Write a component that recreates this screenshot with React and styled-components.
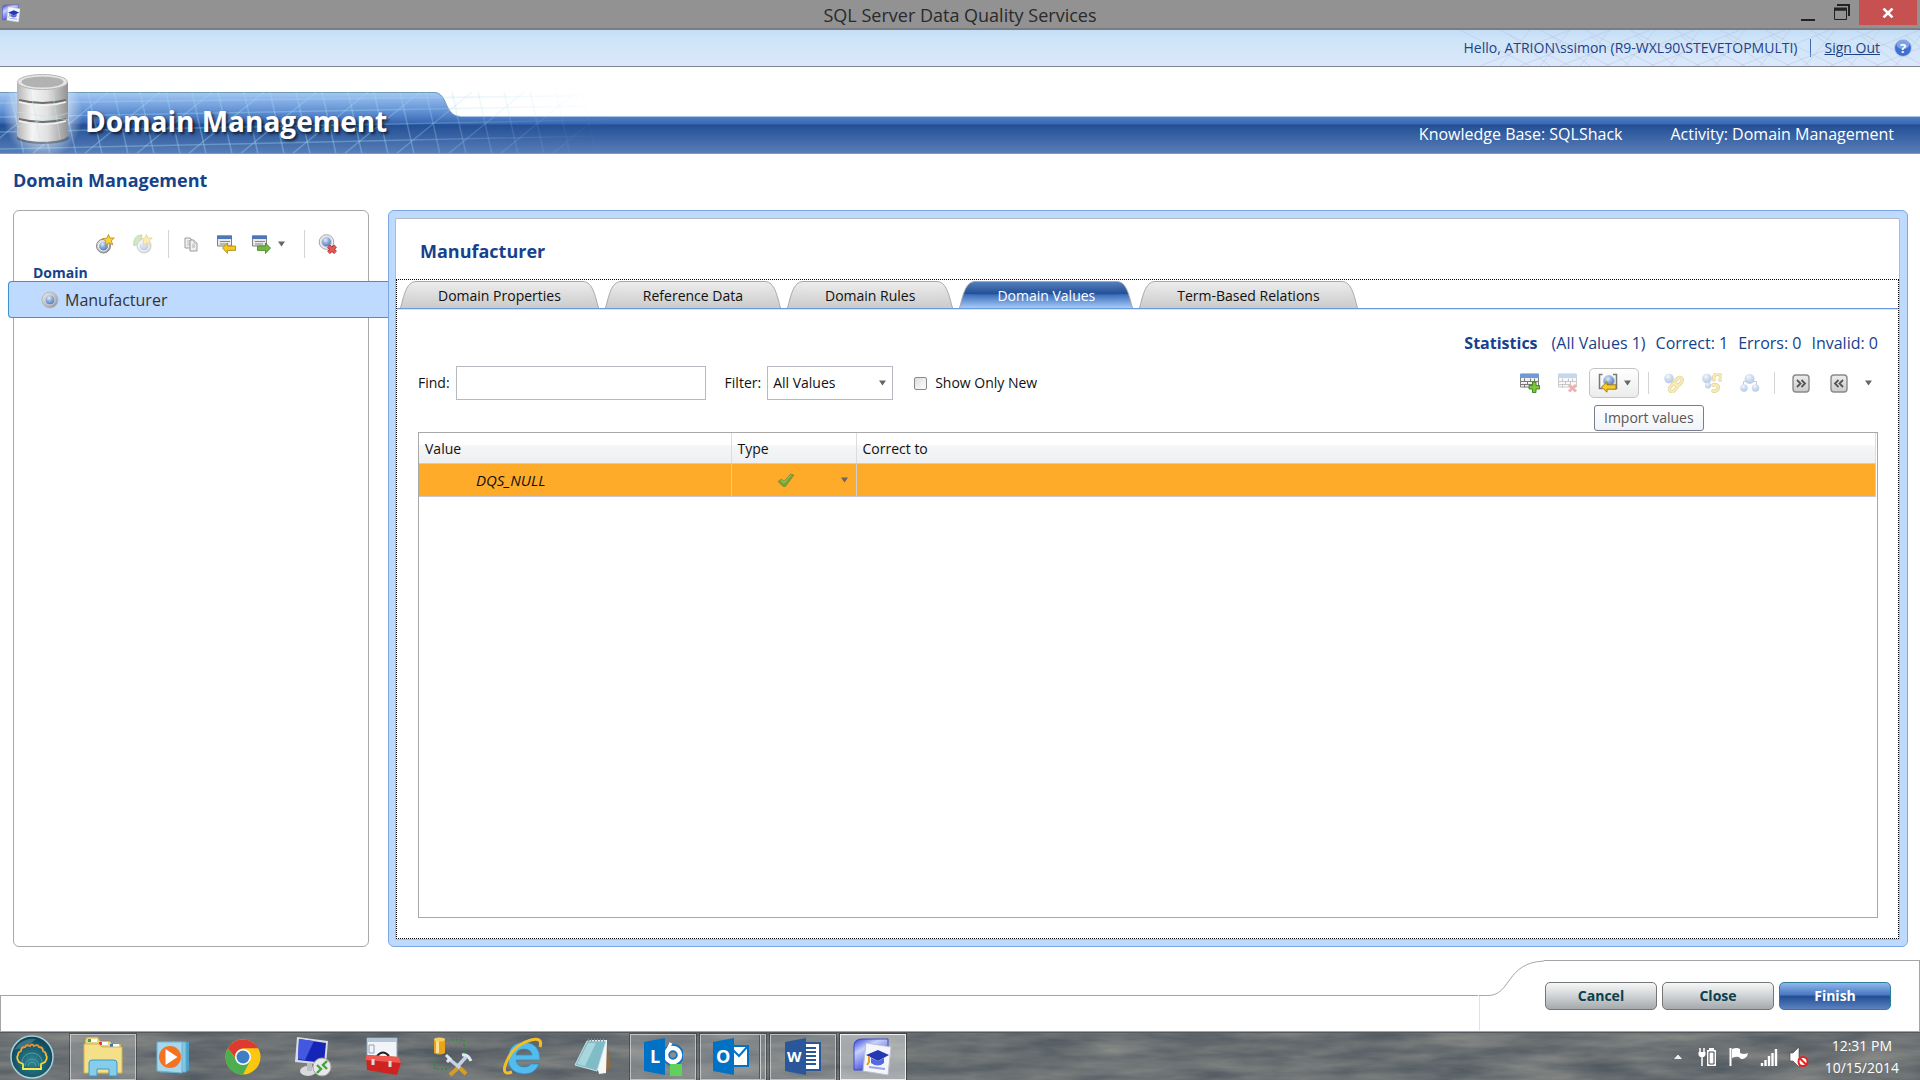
import React from "react";
import styled, { createGlobalStyle, css } from "styled-components";

const color = {
  navy: "#15428b",
  panel: "#bfdaff",
  panelLine: "#7ba7e6",
  line: "#a9a9a9",
  row: "#fdab28",
};

const GlobalStyle = createGlobalStyle`
  * {
    box-sizing: border-box;
  }
  body {
    margin: 0;
    background: #fff;
    color: #111;
    font-family: "Open Sans", "Noto Sans", sans-serif;
    font-size: 14px;
    line-height: 20px;
  }
  button, input, select {
    font: inherit;
    color: inherit;
  }
`;

const plainButton = css`
  display: flex;
  align-items: center;
  justify-content: center;
  padding: 0;
  border: 0;
  background: none;
  cursor: pointer;
`;

const Page = styled.div`
  display: flex;
  flex-direction: column;
  min-height: 100vh;
`;

/* Window title bar */

const TitleBar = styled.div`
  display: grid;
  grid-template-columns: 1fr auto 1fr;
  height: 30px;
  background: #929292;
  border-bottom: 2px solid #7d7d7d;
  color: #2a2a2a;
`;

const AppIcon = styled.div`
  padding: 4px 2px;
`;

const WindowTitle = styled.div`
  font-size: 18px;
  line-height: 30px;
`;

const WindowButtons = styled.div`
  display: flex;
  justify-content: flex-end;
  padding-right: 3px;
`;

const WindowButton = styled.button`
  ${plainButton}
  width: ${(p) => (p.$close ? 58 : 34)}px;
  height: ${(p) => (p.$close ? 25 : 28)}px;
  background: ${(p) => (p.$close ? "#c75050" : "none")};
`;

/* User bar */

const UserBar = styled.div`
  position: relative;
  display: flex;
  align-items: center;
  justify-content: flex-end;
  height: 37px;
  padding-right: 8px;
  color: #1e4287;
  background: linear-gradient(#c3ddf9, #d0e5f8 30%, #dbe8fc);
  border-bottom: 1px solid #808488;
`;

const UserMesh = styled.svg`
  position: absolute;
  right: 0;
  top: 0;
`;

const UserText = styled.span`
  position: relative;
`;

const UserDivider = styled.span`
  width: 1px;
  height: 18px;
  margin: 0 13px;
  background: #3e6bb0;
`;

const SignOut = styled.a`
  position: relative;
  margin-right: 14px;
  color: inherit;
`;

const HelpButton = styled.button`
  ${plainButton}
  position: relative;
`;

/* Banner */

const Banner = styled.header`
  position: relative;
  display: flex;
  align-items: flex-end;
  height: 87px;
`;

const BannerArt = styled.svg`
  position: absolute;
  left: 0;
  bottom: 0;
`;

const BannerTitle = styled.h1`
  position: relative;
  width: 459px;
  margin: 0;
  padding: 0 0 13px 85px;
  color: #fff;
  font-size: 28px;
  line-height: 40px;
  white-space: nowrap;
  text-shadow: 2px 2px 3px rgba(0, 0, 0, 0.7);
`;

const BannerStrip = styled.div`
  position: absolute;
  inset: auto 0 0 0;
  height: 38px;
  background: linear-gradient(#a9c3e6 0 1px, #4f7ec4 1px, #3a67b1 8px, #234f95 9px, #587eb9);
  border-bottom: 1px solid #7b9dbb;
`;

const BannerInfo = styled.div`
  position: relative;
  display: flex;
  flex: 1;
  justify-content: flex-end;
  gap: 48px;
  height: 38px;
  padding-right: 26px;
  color: #fff;
  font-size: 16px;
  line-height: 36px;
`;

/* Workspace */

const SectionTitle = styled.h2`
  margin: 0;
  padding: 14px 13px 18px;
  color: ${color.navy};
  font-size: 18px;
  line-height: 24px;
`;

const Workspace = styled.main`
  display: flex;
  flex: 1;
  gap: 19px;
  padding: 0 12px 13px 13px;
`;

const SidePanel = styled.aside`
  width: 356px;
  border: 1px solid ${color.line};
  border-radius: 6px;
`;

const SideTools = styled.div`
  display: flex;
  align-items: center;
  height: 28px;
  margin: 19px 0 0 81px;
`;

const ToolButton = styled.button`
  ${plainButton}
  width: 20px;
  height: 20px;
  margin-right: ${(p) => p.$gap || 0}px;
  opacity: ${(p) => (p.disabled ? 0.4 : 1)};
`;

const ToolLine = styled.span`
  width: 1px;
  height: ${(p) => p.$height || 28}px;
  margin-right: ${(p) => p.$gap}px;
  background: #d4d4d8;
`;

const SideLabel = styled.div`
  height: 23px;
  padding: 6px 19px 0;
  color: ${color.navy};
  font-weight: bold;
  line-height: 18px;
`;

const DomainItem = styled.button`
  ${plainButton}
  justify-content: flex-start;
  gap: 6px;
  width: calc(100% + 26px);
  height: 37px;
  margin-left: -6px;
  padding-left: 32px;
  background: ${color.panel};
  border: 1px solid #3b94ce;
  border-right: 0;
  border-radius: 4px 0 0 4px;
  color: #333;
  font-size: 16px;
`;

const MainFrame = styled.section`
  display: flex;
  flex: 1;
  padding: 7px 7px 6px 6px;
  background: ${color.panel};
  border: 1px solid ${color.panelLine};
  border-radius: 6px;
`;

const MainPanel = styled.div`
  display: flex;
  flex: 1;
  flex-direction: column;
  background: #fff;
  border: 1px solid #b4bac4;
  border-radius: 2px;
`;

const DomainTitle = styled.h3`
  margin: 0;
  padding: 20px 24px 16px;
  color: ${color.navy};
  font-size: 18px;
  line-height: 24px;
`;

const TabArea = styled.div`
  display: flex;
  flex: 1;
  flex-direction: column;
  border: 1px dotted #000;
`;

const TabBar = styled.div`
  display: flex;
  gap: 6px;
  padding: 1px 3px 0;
  border-bottom: 1px solid #6b9ae0;
  box-shadow: 0 1px 0 #d5e4f9;
`;

const grayFill = "linear-gradient(#ededed, #cbcbcb)";
const blueFill = "linear-gradient(#5580bd, #234f97 45%, #3e6fbb 50%, #a5cbf8)";

const TabButton = styled.button`
  ${plainButton}
  height: 27px;
  color: ${(p) => (p.$active ? "#fff" : "#111")};
`;

const TabLabel = styled.span`
  height: 27px;
  padding: 0 22px;
  line-height: 28px;
  white-space: nowrap;
  border-top: 1px solid #a8a8a8;
  background: ${(p) => (p.$active ? blueFill : grayFill)};
`;

const TabBody = styled.div`
  display: flex;
  flex: 1;
  flex-direction: column;
  padding: 22px 20px 20px 21px;
`;

const Statistics = styled.div`
  display: flex;
  justify-content: flex-end;
  gap: 10px;
  color: ${color.navy};
  font-size: 16px;
  line-height: 24px;
`;

const StatisticsTitle = styled.strong`
  margin-right: 4px;
`;

const ToolRow = styled.div`
  display: flex;
  align-items: center;
  justify-content: space-between;
  height: 34px;
  margin: 11px 0 32px;
`;

const Filters = styled.div`
  display: flex;
  align-items: center;
`;

const FieldLabel = styled.label`
  margin-right: 6px;
`;

const FindInput = styled.input`
  width: 250px;
  height: 34px;
  margin-right: 19px;
  padding: 0 6px;
  border: 1px solid #b6b9c0;
`;

const SelectBox = styled.div`
  position: relative;
  width: 126px;
  margin-right: 21px;
`;

const FilterSelect = styled.select`
  width: 100%;
  height: 34px;
  padding: 0 5px;
  appearance: none;
  background: #fff;
  border: 1px solid #b6b9c0;
`;

const SelectArrow = styled.span`
  position: absolute;
  right: 7px;
  top: 14px;
  display: flex;
  pointer-events: none;
`;

const CheckBox = styled.input`
  appearance: none;
  width: 13px;
  height: 13px;
  margin: 0 8px 0 0;
  background: linear-gradient(135deg, #ddd, #fff);
  border: 1px solid #8a8a8a;
  border-radius: 2px;
`;

const ValueTools = styled.div`
  display: flex;
  align-items: center;
`;

const ImportWrap = styled.div`
  position: relative;
  margin-right: 9px;
`;

const ImportButton = styled.button`
  ${plainButton}
  gap: 6px;
  width: 50px;
  height: 30px;
  background: linear-gradient(#fff, #ececec);
  border: 1px solid #c4c4c4;
  border-radius: 5px;
`;

const Tooltip = styled.div`
  position: absolute;
  left: 5px;
  top: 37px;
  padding: 2px 9px;
  white-space: nowrap;
  color: #575757;
  background: linear-gradient(#fff, #f1f3f8);
  border: 1px solid #767f8f;
  border-radius: 3px;
`;

const GridBox = styled.div`
  flex: 1;
  padding-right: 1px;
  border: 1px solid ${color.line};
`;

const Grid = styled.table`
  width: 100%;
  border-collapse: collapse;
  table-layout: fixed;
`;

const HeadCell = styled.th`
  width: ${(p) => p.$width || "auto"};
  height: 30px;
  padding: 2px 6px 0;
  text-align: left;
  font-weight: normal;
  background: linear-gradient(#fff 40%, #f5f6f8 42%, #eeeff1);
  border-right: 1px solid #dcdde0;
  border-bottom: 1px solid #c9ced6;
`;

const ValueCell = styled.td`
  height: 33px;
  padding: 0 0 0 ${(p) => p.$indent || 0}px;
  font-size: 15px;
  font-style: italic;
  background: ${color.row};
  border-right: 1px solid #d0cfd0;
  border-bottom: 1px solid #c6c9cf;
`;

const TypeButton = styled.button`
  ${plainButton}
  justify-content: space-between;
  width: 100%;
  padding: 0 8px 0 45px;
`;

/* Footer */

const Footer = styled.footer`
  display: flex;
  align-items: flex-end;
  height: 72px;
  border-bottom: 1px solid #a5a5a5;
`;

const FooterLine = styled.div`
  flex: 1;
  height: 36px;
  border: solid #a5a5a5;
  border-width: 1px 0 0 1px;
`;

const FooterCurve = styled.svg`
  border-left: 1px solid transparent;
`;

const FooterActions = styled.div`
  display: flex;
  gap: 5px;
  height: 71px;
  padding: 21px 28px 0 1px;
  border: solid #a5a5a5;
  border-width: 1px 1px 0 0;
`;

const ActionButton = styled.button`
  width: 112px;
  height: 28px;
  padding: 0;
  font-weight: bold;
  color: ${(p) => (p.$primary ? "#fff" : "#083f4c")};
  background: ${(p) =>
    p.$primary
      ? "linear-gradient(#8fb8ee, #4a78c0 45%, #234f97 52%, #5b83bf)"
      : "linear-gradient(#f6f7f7, #d4d7d9 45%, #a4a9ad)"};
  border: 1px solid ${(p) => (p.$primary ? "#2c7f99" : "#757575")};
  border-radius: 5px;
`;

/* Taskbar */

const Taskbar = styled.nav`
  position: relative;
  display: flex;
  align-items: center;
  gap: 4px;
  height: 48px;
  padding-left: 10px;
  overflow: hidden;
  background: #6e7276;
  border-top: 1px solid #54585c;
`;

const Water = styled.svg`
  position: absolute;
  inset: 0;
  width: 100%;
  height: 100%;
`;

const StartButton = styled.button`
  ${plainButton}
  position: relative;
  width: 56px;
  justify-content: flex-start;
`;

const tileLook = {
  open: css`
    background: rgba(255, 255, 255, 0.16);
    border: 1px solid rgba(225, 225, 225, 0.65);
    box-shadow: 0 0 0 1px rgba(40, 40, 40, 0.45);
  `,
  active: css`
    background: rgba(255, 255, 255, 0.42);
    border: 1px solid #eee;
    box-shadow: 0 0 0 1px rgba(40, 40, 40, 0.6);
  `,
};

const Tile = styled.button`
  ${plainButton}
  position: relative;
  width: 66px;
  height: 46px;
  ${(p) => tileLook[p.$look]}
  ${(p) =>
    p.$stacked &&
    css`
      padding-right: 5px;
      &::after {
        content: "";
        position: absolute;
        inset: 0 4px 0 auto;
        border-left: 1px solid #ccc;
        box-shadow: -1px 0 0 #555;
      }
    `}
`;

const Tray = styled.div`
  position: relative;
  display: flex;
  align-items: center;
  gap: 11px;
  margin-left: auto;
  padding-right: 21px;
  color: #fff;
`;

const TrayButton = styled.button`
  ${plainButton}
`;

const Clock = styled.time`
  margin-left: 5px;
  line-height: 22px;
  text-align: center;
`;

/* Icons */

const HiddenSvg = styled.svg`
  position: absolute;
`;

function Arrow() {
  return (
    <svg width="7" height="6" viewBox="0 0 7 6">
      <path d="M0 0.5h7L3.5 5.5z" fill="#666" />
    </svg>
  );
}

function Defs() {
  return (
    <HiddenSvg width="0" height="0">
      <defs>
        <radialGradient id="ball" cx="0.4" cy="0.3" r="0.75">
          <stop offset="0" stopColor="#e3edf9" />
          <stop offset="0.45" stopColor="#8aabd9" />
          <stop offset="1" stopColor="#4a74b0" />
        </radialGradient>
        <linearGradient id="ring" x1="0" y1="0" x2="1" y2="1">
          <stop offset="0" stopColor="#f0f0f0" />
          <stop offset="1" stopColor="#8c8c8c" />
        </linearGradient>
        <linearGradient id="gray" x1="0" y1="0" x2="0" y2="1">
          <stop offset="0" stopColor="#ededed" />
          <stop offset="1" stopColor="#cbcbcb" />
        </linearGradient>
        <linearGradient id="blue" x1="0" y1="0" x2="0" y2="1">
          <stop offset="0" stopColor="#5580bd" />
          <stop offset="0.45" stopColor="#234f97" />
          <stop offset="0.5" stopColor="#3e6fbb" />
          <stop offset="1" stopColor="#a5cbf8" />
        </linearGradient>
        <linearGradient id="metal" x1="0" y1="0" x2="1" y2="0">
          <stop offset="0" stopColor="#b4b4b4" />
          <stop offset="0.3" stopColor="#f4f4f4" />
          <stop offset="0.6" stopColor="#e0e0e0" />
          <stop offset="1" stopColor="#929292" />
        </linearGradient>
        <linearGradient id="folder" x1="0" y1="0" x2="0.6" y2="1">
          <stop offset="0" stopColor="#2f3fd0" />
          <stop offset="0.35" stopColor="#c8d2fc" />
          <stop offset="1" stopColor="#2a35cf" />
        </linearGradient>
      </defs>
    </HiddenSvg>
  );
}

function Sphere() {
  return (
    <svg width="18" height="18" viewBox="0 0 18 18">
      <circle cx="9" cy="9" r="8" fill="url(#ring)" stroke="#b3b6bc" />
      <circle cx="9" cy="9" r="5" fill="url(#ball)" stroke="#ccd6e6" />
    </svg>
  );
}

const STAR = "M13.5 0.5l1.5 3.6 4.3-.2-3 3 1.6 4-4.1-2-3.7 2.6.7-4.4-3.3-2.4 4.3-.6z";
const LEFT_ARROW = "M6.500 14l5-5v3h8v4.400h-8v3z";
const RIGHT_ARROW = "M19.500 14l-5-5v3h-8v4.400h8v3z";

function NewDomainIcon({ leaf }) {
  const cx = leaf ? 11 : 8.5;
  return (
    <svg width="20" height="20" viewBox="0 0 20 20">
      {leaf && <path d="M1 12C0 5 3 1 9 1C8 7 6 10 1 12z" fill="#8fc96b" stroke="#5a9e3d" />}
      <circle cx={cx} cy="12" r="7" fill="url(#ring)" stroke="#858585" />
      <circle cx={cx} cy="12" r="5" fill="url(#ball)" stroke="#f8f8f8" />
      <path d={STAR} fill="#f7d33a" stroke="#b38c21" strokeWidth="0.8" />
    </svg>
  );
}

function CopyIcon() {
  return (
    <svg width="20" height="20" viewBox="0 0 20 20" fill="#f0f0f0" stroke="#9b9b9b">
      <path d="M3 4h5l2 2v8H3z" />
      <path d="M5 7h3M5 9h3M5 11h3" stroke="#bbb" />
      <path d="M8 6h4l3 3v8H8z" />
      <path d="M12 6v3h3M10 11h3M10 13h3" stroke="#b0b0b0" />
    </svg>
  );
}

function SheetArrowIcon({ right }) {
  return (
    <svg width="20" height="20" viewBox="0 0 20 20">
      <path d="M1.5 2h14v10h-14z" fill="#e8e8e8" stroke="#808080" />
      <path d="M1 1.5h15V5H1z" fill="#4d78b8" />
      <path d="M4 7.500h10M4 10h8" stroke="#888" />
      <path
        d={right ? RIGHT_ARROW : LEFT_ARROW}
        fill={right ? "#74b843" : "#f6c71c"}
        stroke={right ? "#437f27" : "#a5821a"}
        strokeWidth="0.8"
      />
    </svg>
  );
}

function DeleteDomainIcon() {
  return (
    <svg width="20" height="20" viewBox="0 0 20 20">
      <circle cx="8.5" cy="8" r="7.3" fill="#eee" stroke="#a5a5a5" />
      <circle cx="8.5" cy="8" r="5" fill="url(#ball)" stroke="#cbd3df" />
      <path d="M10.5 12l7 6.5m0-6.5l-7 6.5" stroke="#a32c2c" strokeWidth="4" />
      <path d="M10.5 12l7 6.5m0-6.5l-7 6.5" stroke="#e05a58" strokeWidth="2.4" />
    </svg>
  );
}

function GridRowIcon({ remove }) {
  return (
    <svg width="20" height="20" viewBox="0 0 20 20">
      <path d="M0.5 1h18v13h-18z" fill="#f0f0f0" stroke="#808080" />
      <path d="M0 1h19v4H0z" fill="#6f9ad8" />
      <path
        d="M0 8.5h19M0 11.5h13M4.5 5.5v3M10.5 5.5v3M14.5 5.5v3M7.5 8.5v3M12.5 8.5v3M4.5 11.5v3"
        stroke="#777"
      />
      {remove ? (
        <path d="M11 12l7 6.500m0-6.500l-7 6.500" stroke="#d2403c" strokeWidth="3" />
      ) : (
        <path
          d="M12.5 9h3.500v3.500h3.500V16H16v3.500h-3.500V16H9v-3.500h3.500z"
          fill="#7cc63c"
          stroke="#3f7d20"
          strokeWidth="0.9"
        />
      )}
    </svg>
  );
}

function ImportIcon() {
  return (
    <svg width="20" height="20" viewBox="0 0 20 20">
      <path d="M4.500 1.500h-3v14h3M15 1.500h3.500v14H15" fill="none" stroke="#777" strokeWidth="1.500" />
      <circle cx="11" cy="8" r="5.500" fill="url(#ball)" stroke="#b8c4d6" />
      <path d="M3.500 14L9 8.800v3h9v4.400H9v3z" fill="#f8cc22" stroke="#94721c" strokeWidth="0.900" />
    </svg>
  );
}

function LinkIcon({ broken }) {
  return (
    <svg width="20" height="20" viewBox="0 0 20 20">
      <circle cx="5" cy="5.500" r="4.800" fill="url(#ball)" />
      {broken && <circle cx="6" cy="12.500" r="3" fill="url(#ball)" />}
      <g fill="none" strokeLinecap="round">
        {[
          { stroke: "#b08a18", strokeWidth: 3.4 },
          { stroke: "#f4cf3c", strokeWidth: 2 },
        ].map((line) =>
          broken ? (
            <path key={line.stroke} {...line} d="M12 7q-1-3 1-5t5 0 0 5M11 12q4-1 5 1t-1 4-4 1" />
          ) : (
            <g key={line.stroke} {...line} transform="rotate(-50 12 11)">
              <rect x="3" y="8.500" width="9" height="5.500" rx="2.700" />
              <rect x="11" y="8.500" width="9" height="5.500" rx="2.700" />
            </g>
          )
        )}
      </g>
    </svg>
  );
}

function TreeIcon() {
  return (
    <svg width="20" height="20" viewBox="0 0 20 20">
      <path d="M3.5 14V8.5h13V14" fill="none" stroke="#777" />
      <circle cx="9.5" cy="6" r="5" fill="url(#ball)" />
      <circle cx="4" cy="15" r="3.7" fill="url(#ball)" />
      <circle cx="15.5" cy="15" r="3.7" fill="url(#ball)" />
    </svg>
  );
}

function ChevronsIcon({ left }) {
  return (
    <svg width="18" height="19" viewBox="0 0 18 19">
      <rect x="1" y="1" width="16" height="17" rx="3" fill="url(#gray)" stroke="#8a8a8a" strokeWidth="1.4" />
      <path
        d={left ? "M8.5 6L5 9.5 8.5 13M13 6L9.5 9.5 13 13" : "M5 6l3.5 3.5L5 13M9.5 6L13 9.5 9.5 13"}
        fill="none"
        stroke="#555"
        strokeWidth="1.8"
      />
    </svg>
  );
}

function CheckIcon() {
  return (
    <svg width="18" height="16" viewBox="0 0 18 16">
      <path d="M1 9.500l3.500-2.500L7 9.500 13.500 2l3.500 1L8.500 14.500H6z" fill="#6fa63a" stroke="#8c8a34" strokeWidth="0.800" />
      <path d="M4 8.500l3 2.500 7-8" fill="none" stroke="#9ccc66" />
    </svg>
  );
}

function DqsIcon({ size }) {
  return (
    <svg width={size} height={size} viewBox="0 0 40 40">
      <path d="M1 33V9Q1 2 9 2h26v31H1z" fill="url(#folder)" stroke="#3a49c8" />
      <path d="M13 6l25 4-3 28-25-4z" fill="#f4f6fc" stroke="#bcc2d4" />
      <path d="M13 18l12-5 11 5-11 6z" fill="#2637b3" />
      <path d="M18 21v5q7 5 13 0v-5l-6 3z" fill="#5468e4" />
      <path d="M16 19v6l-2 3" fill="none" stroke="#e0a020" strokeWidth="2" />
      <path d="M16 30l16 2" stroke="#98a6e8" strokeWidth="2" />
    </svg>
  );
}

function TabEar({ right, active }) {
  const d = "M0.5 27C4 15 6 1 16 0.5";
  return (
    <svg width="16" height="27" viewBox="0 0 16 27">
      <g transform={right ? "translate(16 0) scale(-1 1)" : undefined}>
        <path d={`${d}V27z`} fill={active ? "url(#blue)" : "url(#gray)"} />
        <path d={d} fill="none" stroke="#a8a8a8" />
      </g>
    </svg>
  );
}

function BannerDrawing() {
  const steps = Array.from({ length: 24 }, (_, i) => i * 26 - 20);
  return (
    <BannerArt width="640" height="87" viewBox="0 0 640 87" aria-hidden="true">
      <defs>
        <linearGradient id="tabFill" x1="0" y1="0" x2="0" y2="1">
          <stop offset="0" stopColor="#a6c9f6" />
          <stop offset="0.35" stopColor="#5b8ad0" />
          <stop offset="0.5" stopColor="#3a68b2" />
          <stop offset="0.54" stopColor="#234f95" />
          <stop offset="1" stopColor="#587eb9" />
        </linearGradient>
        <linearGradient id="fadeFill" x1="0" y1="0" x2="1" y2="0">
          <stop offset="0.6" stopColor="#fff" />
          <stop offset="0.95" stopColor="#fff" stopOpacity="0" />
        </linearGradient>
        <mask id="fade">
          <path d="M0 25h640v61H0z" fill="url(#fadeFill)" />
        </mask>
        <radialGradient id="glow">
          <stop offset="0.4" stopColor="#fff" stopOpacity="0.85" />
          <stop offset="1" stopColor="#fff" stopOpacity="0" />
        </radialGradient>
      </defs>
      <path d="M0 25H434C448 25 444 49 460 49.5V86H0z" fill="url(#tabFill)" />
      <path d="M0 25.5H434C448 25.5 444 49 460 49.5" fill="none" stroke="#6d9bb4" />
      <g mask="url(#fade)" stroke="#9fdcf0" strokeOpacity="0.36" strokeWidth="1.5" fill="none">
        {steps.map((x) => (
          <path key={x} d={`M${x + 4} 25L${x + 18} 87`} />
        ))}
        {steps
          .filter((x, i) => i % 2 === 0)
          .map((x) => (
            <path key={x} d={`M${x} 87L${x + 76} 25`} />
          ))}
        <path d="M0 36L640 28M0 50L640 38M0 65L640 52M0 82L640 68" />
      </g>
      <ellipse cx="43" cy="48" rx="40" ry="44" fill="url(#glow)" />
      <ellipse cx="43" cy="71" rx="26" ry="6" fill="#333" opacity="0.4" />
      <path d="M17 16v52c0 9 51 9 51 0V16z" fill="url(#metal)" />
      <path d="M19 33q24 6 47 0M19 52q24 6 47 0" fill="none" stroke="#6e6e6e" strokeWidth="2" />
      <path d="M19 35q24 7 47 0M19 54q24 7 47 0" fill="none" stroke="#f4f4f4" strokeWidth="1.5" />
      <path d="M17 45l51 8M17 60l51-14M30 22l10 50M52 22l8 50" stroke="#c4e6ea" strokeOpacity="0.5" />
      <ellipse cx="42.5" cy="15" rx="25" ry="7.5" fill="#e6e6e6" stroke="#b5b5b5" />
      <ellipse cx="42.5" cy="15" rx="21" ry="5.5" fill="#b2b2b2" />
    </BannerArt>
  );
}

function WaterTexture() {
  return (
    <Water aria-hidden="true">
      <filter id="water" x="0" y="0" width="100%" height="100%" colorInterpolationFilters="sRGB">
        <feTurbulence type="fractalNoise" baseFrequency="0.012 0.07" numOctaves="4" seed="8" />
        <feColorMatrix values="0.3 0 0 0 0.27  0.26 0 0 0 0.31  0.2 0 0 0 0.35  0 0 0 0 1" />
      </filter>
      <rect width="100%" height="100%" filter="url(#water)" />
    </Water>
  );
}

function StartIcon() {
  return (
    <svg width="44" height="44" viewBox="0 0 44 44">
      <defs>
        <radialGradient id="orb" cx="0.5" cy="0.6" r="0.6">
          <stop offset="0" stopColor="#2f8693" />
          <stop offset="1" stopColor="#0a4155" />
        </radialGradient>
        <linearGradient id="shell" x1="0" y1="0" x2="0" y2="1">
          <stop offset="0" stopColor="#ef8b2c" />
          <stop offset="1" stopColor="#f5f04d" />
        </linearGradient>
      </defs>
      <circle cx="22" cy="22" r="21" fill="url(#orb)" stroke="#a9cfd8" strokeWidth="1.5" />
      <path d="M4 15Q12 2 26 4Q18 12 4 15z" fill="#9bc7cd" opacity="0.3" />
      <path
        d="M13 34v-5l-4-2q-3-4-1-7 0-3 3-4 0-4 4-4 2-3 5-1 2-3 4 0 4-2 5 1 4 0 4 4 3 1 3 4 2 3-1 7l-4 2v5z"
        fill="none"
        stroke="url(#shell)"
        strokeWidth="1.8"
      />
      <g fill="none" stroke="#4e9da5">
        <path d="M18 31a4 4 0 0 1 8 0M15 31a7 7 0 0 1 14 0M12 27a10 9 0 0 1 20 0" />
      </g>
    </svg>
  );
}

const appIcons = {
  explorer: (
    <svg width="42" height="40" viewBox="0 0 42 40">
      <path d="M3 3l2-3h11l2 4h10l2 3h9v4H3z" fill="#ead57d" stroke="#a4883b" strokeWidth="0.6" />
      <path d="M6 2h9v3H6zM17 5h9v3h-9zM28 7h9v3h-9z" fill="#fff" />
      <path d="M6 2h3v3H6z" fill="#3fa34d" />
      <path d="M17 5h3v3h-3z" fill="#dc3c34" />
      <path d="M28 7h3v3h-3z" fill="#2a78c2" />
      <path d="M2 7h15l3 3h20v26H2z" fill="#f5e08a" stroke="#d2b351" />
      <path d="M7 26q0-3 3-3h22q3 0 3 3v13h-8v-7H15v7H7z" fill="#86cdec" stroke="#3c98c6" />
    </svg>
  ),
  player: (
    <svg width="34" height="34" viewBox="0 0 34 34">
      <path d="M8 2h25v28l-4 2H8z" fill="#4ba0c9" />
      <path d="M4 2h26v30H4z" fill="#86c6e3" stroke="#5aaccf" />
      <path d="M1 2h25v31L1 31z" fill="#a6d7ec" stroke="#6bb0d1" />
      <circle cx="14" cy="17" r="11" fill="#f37321" />
      <path d="M9.5 9l12 8-12 8z" fill="#fff" />
    </svg>
  ),
  chrome: (
    <svg width="36" height="36" viewBox="0 0 36 36">
      <circle cx="18" cy="18" r="17.5" fill="#fcc70f" />
      <path d="M2.8 9.3A17.5 17.5 0 0 0 18 35.5L25 22 11 20z" fill="#4cae50" />
      <path d="M2.8 9.3A17.5 17.5 0 0 1 33.2 9.3H18a9 9 0 0 0-8 9z" fill="#dd3b31" />
      <circle cx="18" cy="18" r="8" fill="#fff" />
      <circle cx="18" cy="18" r="6.5" fill="#3f7ec5" />
    </svg>
  ),
  remote: (
    <svg width="38" height="40" viewBox="0 0 38 40">
      <path d="M3 0l31 4-2 24-31-3z" fill="#d9dde3" />
      <path d="M5 2l27 4-2 20-26-3z" fill="#1425b8" />
      <path d="M5 2l15 2-9 19-7-1z" fill="#4358e0" />
      <ellipse cx="14" cy="34" rx="8" ry="5" fill="#d8dadd" />
      <path d="M13 26h5v8h-5z" fill="#bcc0c5" />
      <circle cx="28" cy="30" r="9" fill="#e8e8e8" stroke="#a4a4a4" />
      <path d="M23 28l4 4-4 4M33 24l-4 4 4 4" fill="none" stroke="#45a33b" strokeWidth="2.4" />
    </svg>
  ),
  toolbox: (
    <svg width="38" height="40" viewBox="0 0 38 40">
      <path d="M3 1h30v24H3z" fill="#f1f4f8" stroke="#8aa0ba" />
      <path d="M3 1h30v4H3z" fill="#b4c5da" />
      <path d="M5 8h5v8H5z" fill="none" stroke="#8aa0ba" />
      <path d="M13 19q6-7 12 0" fill="none" stroke="#222" strokeWidth="2" />
      <path d="M2 18l33 2 2 6-4 12-30-5z" fill="#cf2322" />
      <path d="M2 18l33 2 2 6-35-3z" fill="#ef5a50" />
      <path d="M9 22v6M26 24v6" stroke="#ddd" strokeWidth="3" />
    </svg>
  ),
  database: (
    <svg width="40" height="40" viewBox="0 0 40 40">
      <path d="M1 2v14q5 3 11 0V2z" fill="#e9a41c" />
      <path d="M3 3v13h3V3z" fill="#ffe294" />
      <ellipse cx="6.5" cy="2.5" rx="5.500" ry="2" fill="#f9cd62" />
      <path d="M19 3h12v13M2 22v10h13" fill="none" stroke="#28922c" strokeWidth="1.5" strokeDasharray="2 2" />
      <path d="M17 38l10-9" stroke="#d59d22" strokeWidth="4" />
      <path d="M24 30l9-10M15 21l12 10" stroke="#c5d2e6" strokeWidth="3.5" />
      <path d="M27 31l6 6" stroke="#d59d22" strokeWidth="4" />
      <path d="M29 18q6-1 9 6M13 18l4 4-3 3" fill="none" stroke="#dfe7f3" strokeWidth="3" />
    </svg>
  ),
  ie: (
    <svg width="40" height="40" viewBox="0 0 40 40">
      <path
        d="M37 23H13q1 7 8 7 5 0 7-3h8q-4 10-15 10Q5 36 5 21 6 6 21 5q16 1 16 18zM13 18h16q-1-6-8-6t-8 6z"
        fill="#52bdec"
        stroke="#2387c2"
        strokeWidth="0.6"
        fillRule="evenodd"
      />
      <path d="M37 10Q40 0 28 3Q10 8 3 26Q-2 39 9 35" fill="none" stroke="#f4bf23" strokeWidth="3" />
    </svg>
  ),
  notepad: (
    <svg width="38" height="38" viewBox="0 0 38 38">
      <path d="M33 3l4 26-8 7z" fill="#8b6c43" />
      <path d="M16 2h17l-1 33-7 1z" fill="#f4f8f8" />
      <path d="M13 3h19L23 33 1 27z" fill="#7fbcc7" stroke="#c4e2e7" />
      <path d="M14 5h8L11 28l-8-2z" fill="#a8d6dd" />
      <path d="M14 2h18" stroke="#888" strokeWidth="3" strokeDasharray="1 2" />
    </svg>
  ),
  lync: (
    <svg width="40" height="40" viewBox="0 0 40 40">
      <circle cx="30" cy="18" r="7" fill="none" stroke="#1273c2" strokeWidth="8" />
      <circle cx="30" cy="18" r="7" fill="none" stroke="#fff" strokeWidth="4.500" />
      <path d="M24 14l4-8" stroke="#fff" strokeWidth="3" />
      <path d="M1 5l21-4v37L1 34z" fill="#0072c6" />
      <text x="7" y="26" fontSize="18" fontWeight="bold" fill="#fff">L</text>
      <path d="M27 27h12v12H27z" fill="#60d15b" />
    </svg>
  ),
  outlook: (
    <svg width="38" height="40" viewBox="0 0 38 40">
      <path d="M18 9h18v20H18z" fill="#fff" stroke="#0072c6" strokeWidth="2" />
      <path d="M20 12l7 7 8-9" fill="none" stroke="#0072c6" strokeWidth="2" />
      <path d="M1 5l21-4v37L1 34z" fill="#0072c6" />
      <text x="4" y="26" fontSize="18" fontWeight="bold" fill="#fff">O</text>
    </svg>
  ),
  word: (
    <svg width="38" height="40" viewBox="0 0 38 40">
      <path d="M18 6h18v27H18z" fill="#fff" stroke="#2a579a" strokeWidth="2" />
      <path d="M22 11h10m-10 4h10m-10 4h10m-10 4h10m-10 4h10" stroke="#2a579a" strokeWidth="2" />
      <path d="M1 5l21-4v37L1 34z" fill="#2a579a" />
      <text x="3" y="25" fontSize="15" fontWeight="bold" fill="#fff">W</text>
    </svg>
  ),
  dqs: <DqsIcon size={40} />,
};

const tabs = ["Domain Properties", "Reference Data", "Domain Rules", "Domain Values", "Term-Based Relations"];

const apps = [
  { id: "explorer", label: "File Explorer", look: "open" },
  { id: "player", label: "Media Player" },
  { id: "chrome", label: "Chrome" },
  { id: "remote", label: "Remote Desktop" },
  { id: "toolbox", label: "Toolbox" },
  { id: "database", label: "Database Tools" },
  { id: "ie", label: "Internet Explorer" },
  { id: "notepad", label: "Notepad" },
  { id: "lync", label: "Lync", look: "open" },
  { id: "outlook", label: "Outlook", look: "open", stacked: true },
  { id: "word", label: "Word", look: "open" },
  { id: "dqs", label: "Data Quality Services", look: "active" },
];

function Tab({ label, active }) {
  return (
    <TabButton role="tab" aria-selected={active} $active={active}>
      <TabEar active={active} />
      <TabLabel $active={active}>{label}</TabLabel>
      <TabEar active={active} right />
    </TabButton>
  );
}

function Sidebar() {
  return (
    <SidePanel>
      <SideTools>
        <ToolButton aria-label="Create a domain" $gap={18}><NewDomainIcon /></ToolButton>
        <ToolButton aria-label="Create a composite domain" $gap={15} disabled><NewDomainIcon leaf /></ToolButton>
        <ToolLine $gap={13} />
        <ToolButton aria-label="Copy" $gap={14}><CopyIcon /></ToolButton>
        <ToolButton aria-label="Import" $gap={15}><SheetArrowIcon /></ToolButton>
        <ToolButton aria-label="Export"><SheetArrowIcon right /></ToolButton>
        <ToolButton aria-label="Export options" $gap={13}><Arrow /></ToolButton>
        <ToolLine $gap={13} />
        <ToolButton aria-label="Delete domain"><DeleteDomainIcon /></ToolButton>
      </SideTools>
      <SideLabel>Domain</SideLabel>
      <DomainItem>
        <Sphere />
        Manufacturer
      </DomainItem>
    </SidePanel>
  );
}

function Toolbar() {
  return (
    <ToolRow>
      <Filters>
        <FieldLabel htmlFor="find">Find:</FieldLabel>
        <FindInput id="find" type="text" />
        <FieldLabel htmlFor="filter">Filter:</FieldLabel>
        <SelectBox>
          <FilterSelect id="filter" defaultValue="all">
            <option value="all">All Values</option>
          </FilterSelect>
          <SelectArrow><Arrow /></SelectArrow>
        </SelectBox>
        <CheckBox id="only-new" type="checkbox" />
        <label htmlFor="only-new">Show Only New</label>
      </Filters>
      <ValueTools>
        <ToolButton aria-label="Add value" $gap={18}><GridRowIcon /></ToolButton>
        <ToolButton aria-label="Delete value" $gap={11} disabled><GridRowIcon remove /></ToolButton>
        <ImportWrap>
          <ImportButton aria-label="Import values" aria-describedby="import-tip">
            <ImportIcon />
            <Arrow />
          </ImportButton>
          <Tooltip id="import-tip" role="tooltip">Import values</Tooltip>
        </ImportWrap>
        <ToolLine $gap={15} $height={22} />
        <ToolButton aria-label="Set as synonyms" $gap={18} disabled><LinkIcon /></ToolButton>
        <ToolButton aria-label="Break synonyms" $gap={18} disabled><LinkIcon broken /></ToolButton>
        <ToolButton aria-label="Set as leading" $gap={14} disabled><TreeIcon /></ToolButton>
        <ToolLine $gap={16} $height={22} />
        <ToolButton aria-label="Expand" $gap={18}><ChevronsIcon /></ToolButton>
        <ToolButton aria-label="Collapse" $gap={9}><ChevronsIcon left /></ToolButton>
        <ToolButton aria-label="More"><Arrow /></ToolButton>
      </ValueTools>
    </ToolRow>
  );
}

function ValuesGrid() {
  return (
    <GridBox>
      <Grid>
        <thead>
          <tr>
            <HeadCell $width="312px">Value</HeadCell>
            <HeadCell $width="125px">Type</HeadCell>
            <HeadCell>Correct to</HeadCell>
          </tr>
        </thead>
        <tbody>
          <tr>
            <ValueCell $indent={57}>DQS_NULL</ValueCell>
            <ValueCell>
              <TypeButton aria-label="Correct">
                <CheckIcon />
                <Arrow />
              </TypeButton>
            </ValueCell>
            <ValueCell />
          </tr>
        </tbody>
      </Grid>
    </GridBox>
  );
}

function TrayIcons() {
  return (
    <>
      <TrayButton aria-label="Show hidden icons">
        <svg width="18" height="18" viewBox="0 0 18 18">
          <path d="M4 11.5L9 6l5 5.5z" fill="#eee" stroke="#444" strokeWidth="0.6" />
        </svg>
      </TrayButton>
      <TrayButton aria-label="Battery">
        <svg width="20" height="20" viewBox="0 0 20 20">
          <path d="M9 3h2V1h5v2h2v16H9z" fill="#fff" />
          <path d="M11 5h5v12h-5z" fill="none" stroke="#444" />
          <path d="M2 1v5M6 1v5M4 8v11" stroke="#fff" strokeWidth="1.5" />
          <path d="M0.5 5h7v3L6 10H2L0.5 8z" fill="#fff" />
        </svg>
      </TrayButton>
      <TrayButton aria-label="Action center">
        <svg width="20" height="20" viewBox="0 0 20 20">
          <path d="M1.5 1v18" stroke="#fff" strokeWidth="2" />
          <path d="M3 2q5-2 8 0v4q4 2 8 0-1 6-7 6l-2-2q-3-1-7 1z" fill="#fff" />
        </svg>
      </TrayButton>
      <TrayButton aria-label="Network">
        <svg width="18" height="20" viewBox="0 0 18 20">
          <path d="M2 19v-3m3.5 3v-6M9 19V9m3.5 10V6M16 19V2" stroke="#fff" strokeWidth="2.4" />
        </svg>
      </TrayButton>
      <TrayButton aria-label="Volume muted">
        <svg width="20" height="20" viewBox="0 0 20 20">
          <path d="M1 6h3l6-6v20l-6-6H1z" fill="#fff" stroke="#444" strokeWidth="0.6" />
          <circle cx="14" cy="14.5" r="4.5" fill="#fff" stroke="#e32222" strokeWidth="2" />
          <path d="M11 11.5l6 6" stroke="#e32222" strokeWidth="2" />
        </svg>
      </TrayButton>
    </>
  );
}

function App() {
  return (
    <Page>
      <GlobalStyle />
      <Defs />
      <TitleBar>
        <AppIcon><DqsIcon size={19} /></AppIcon>
        <WindowTitle>SQL Server Data Quality Services</WindowTitle>
        <WindowButtons>
          <WindowButton aria-label="Minimize">
            <svg width="16" height="20"><path d="M1 15h14v2H1z" fill="#222" /></svg>
          </WindowButton>
          <WindowButton aria-label="Restore">
            <svg width="16" height="20" viewBox="0 0 16 20" fill="none" stroke="#222">
              <path d="M3 1h12v11" strokeWidth="2" />
              <path d="M0.5 6h12v9.500h-12z" />
              <path d="M0 5h13" strokeWidth="3" />
            </svg>
          </WindowButton>
          <WindowButton aria-label="Close window" $close>
            <svg width="12" height="10"><path d="M1.500 0.500l9 9m0-9l-9 9" stroke="#fff" strokeWidth="2.500" /></svg>
          </WindowButton>
        </WindowButtons>
      </TitleBar>
      <UserBar>
        <UserMesh width="470" height="36" viewBox="0 0 470 36" fill="none" stroke="#b9c6dd" strokeOpacity="0.5">
          {[60, 100, 140, 185, 230, 275, 320, 365, 410, 455].map((x) => (
            <path
              key={x}
              d={`M${x - 50} 0L${x + 20} 36M${x - 10} 36L${x + 20} 0M${x - 30} 36L${x + 60} 0M${x} 5L${x + 40} 36`}
            />
          ))}
        </UserMesh>
        <UserText>Hello, ATRION\ssimon (R9-WXL90\STEVETOPMULTI)</UserText>
        <UserDivider />
        <SignOut href="#signout">Sign Out</SignOut>
        <HelpButton aria-label="Help">
          <svg width="18" height="18" viewBox="0 0 18 18">
            <circle cx="9" cy="9" r="8.5" fill="#3f6fd0" stroke="#b9cdf0" />
            <ellipse cx="9" cy="5.5" rx="6.5" ry="4.5" fill="#a9c4f2" opacity="0.6" />
            <text x="6" y="14" fontSize="13" fontWeight="bold" fill="#fff">?</text>
          </svg>
        </HelpButton>
      </UserBar>
      <Banner>
        <BannerStrip />
        <BannerDrawing />
        <BannerTitle>Domain Management</BannerTitle>
        <BannerInfo>
          <span>Knowledge Base: SQLShack</span>
          <span>Activity: Domain Management</span>
        </BannerInfo>
      </Banner>
      <SectionTitle>Domain Management</SectionTitle>
      <Workspace>
        <Sidebar />
        <MainFrame>
          <MainPanel>
            <DomainTitle>Manufacturer</DomainTitle>
            <TabArea>
              <TabBar role="tablist">
                {tabs.map((label) => (
                  <Tab key={label} label={label} active={label === "Domain Values"} />
                ))}
              </TabBar>
              <TabBody>
                <Statistics>
                  <StatisticsTitle>Statistics</StatisticsTitle>
                  <span>(All Values 1)</span>
                  <span>Correct: 1</span>
                  <span>Errors: 0</span>
                  <span>Invalid: 0</span>
                </Statistics>
                <Toolbar />
                <ValuesGrid />
              </TabBody>
            </TabArea>
          </MainPanel>
        </MainFrame>
      </Workspace>
      <Footer>
        <FooterLine />
        <FooterCurve width="66" height="71" viewBox="0 0 66 71" fill="none" stroke="#a5a5a5">
          <path d="M0.5 36v35" stroke="#e2e2e2" />
          <path d="M0 35.5H9C33 35.5 27 2 66 0.5" />
        </FooterCurve>
        <FooterActions>
          <ActionButton>Cancel</ActionButton>
          <ActionButton>Close</ActionButton>
          <ActionButton $primary>Finish</ActionButton>
        </FooterActions>
      </Footer>
      <Taskbar>
        <WaterTexture />
        <StartButton aria-label="Start"><StartIcon /></StartButton>
        {apps.map((app) => (
          <Tile key={app.id} aria-label={app.label} $look={app.look} $stacked={app.stacked}>
            {appIcons[app.id]}
          </Tile>
        ))}
        <Tray>
          <TrayIcons />
          <Clock dateTime="2014-10-15T12:31">
            12:31 PM
            <br />
            10/15/2014
          </Clock>
        </Tray>
      </Taskbar>
    </Page>
  );
}

export default App;
